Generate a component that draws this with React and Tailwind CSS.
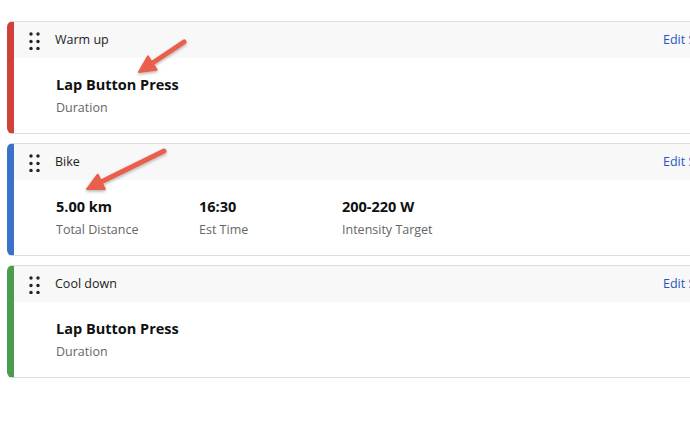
import React from "react";

const steps = [
    {
        name: "Warm up",
        bar: "border-l-[#d0413a]",
        stats: [{ value: "Lap Button Press", label: "Duration" }],
    },
    {
        name: "Bike",
        bar: "border-l-[#3a72c9]",
        stats: [
            { value: "5.00 km", label: "Total Distance" },
            { value: "16:30", label: "Est Time" },
            { value: "200-220 W", label: "Intensity Target" },
        ],
    },
    {
        name: "Cool down",
        bar: "border-l-[#4a9d4c]",
        stats: [{ value: "Lap Button Press", label: "Duration" }],
    },
];

const DragHandle = () => (
    <svg width="12" height="18" viewBox="0 0 12 18" className="shrink-0">
        {[2, 9.5, 16.5].map((cy) => (
            <g key={cy}>
                <circle cx="2" cy={cy} r="1.7" fill="#222" />
                <circle cx="9" cy={cy} r="1.7" fill="#222" />
            </g>
        ))}
    </svg>
);

const StepCard = ({ step }) => (
    <div className={`w-[740px] rounded-l-[6px] border border-[#dedede] border-l-[7px] ${step.bar} bg-white`}>
        <div className="flex h-[36px] items-center bg-[#f8f8f8] pl-[15px] pt-[1px]">
            <DragHandle />
            <span className="ml-[14px] w-[608px] shrink-0 text-[12.5px] text-[#222]">{step.name}</span>
            <span className="text-[12.5px] text-[#2357c6]">Edit Step</span>
        </div>
        <div className="flex h-[75px] pt-[17px] pl-[42px]">
            {step.stats.map((s) => (
                <div key={s.label} className="w-[143px] shrink-0">
                    <div className="text-[14.5px] font-bold leading-[20px] text-[#111]">{s.value}</div>
                    <div className="mt-[4px] text-[12.5px] leading-[18px] text-[#666]">{s.label}</div>
                </div>
            ))}
        </div>
    </div>
);

const Arrows = () => (
    <svg className="pointer-events-none absolute left-0 top-0" width="690" height="433">
        <defs>
            <filter id="sh" x="-20%" y="-20%" width="140%" height="140%">
                <feDropShadow dx="0" dy="1.5" stdDeviation="1.5" floodColor="#000" floodOpacity="0.3" />
            </filter>
        </defs>
        <g filter="url(#sh)" fill="#e8604c" stroke="#e8604c">
            <line x1="184" y1="42" x2="154" y2="62" strokeWidth="5" strokeLinecap="round" />
            <polygon points="139,72 156.7,69.8 147.9,56.4" strokeWidth="2" strokeLinejoin="round" />
            <line x1="164" y1="151" x2="103" y2="181" strokeWidth="5" strokeLinecap="round" />
            <polygon points="87,189 104.9,189.1 97.8,174.7" strokeWidth="2" strokeLinejoin="round" />
        </g>
    </svg>
);

export default function App() {
    return (
        <div
            className="relative h-[433px] w-[690px] overflow-hidden bg-white pl-[7px] pt-[21px]"
            style={{ fontFamily: '"Open Sans", "Liberation Sans", sans-serif' }}
        >
            <div className="flex flex-col gap-[9px]">
                {steps.map((s) => (
                    <StepCard key={s.name} step={s} />
                ))}
            </div>
            <Arrows />
        </div>
    );
}
